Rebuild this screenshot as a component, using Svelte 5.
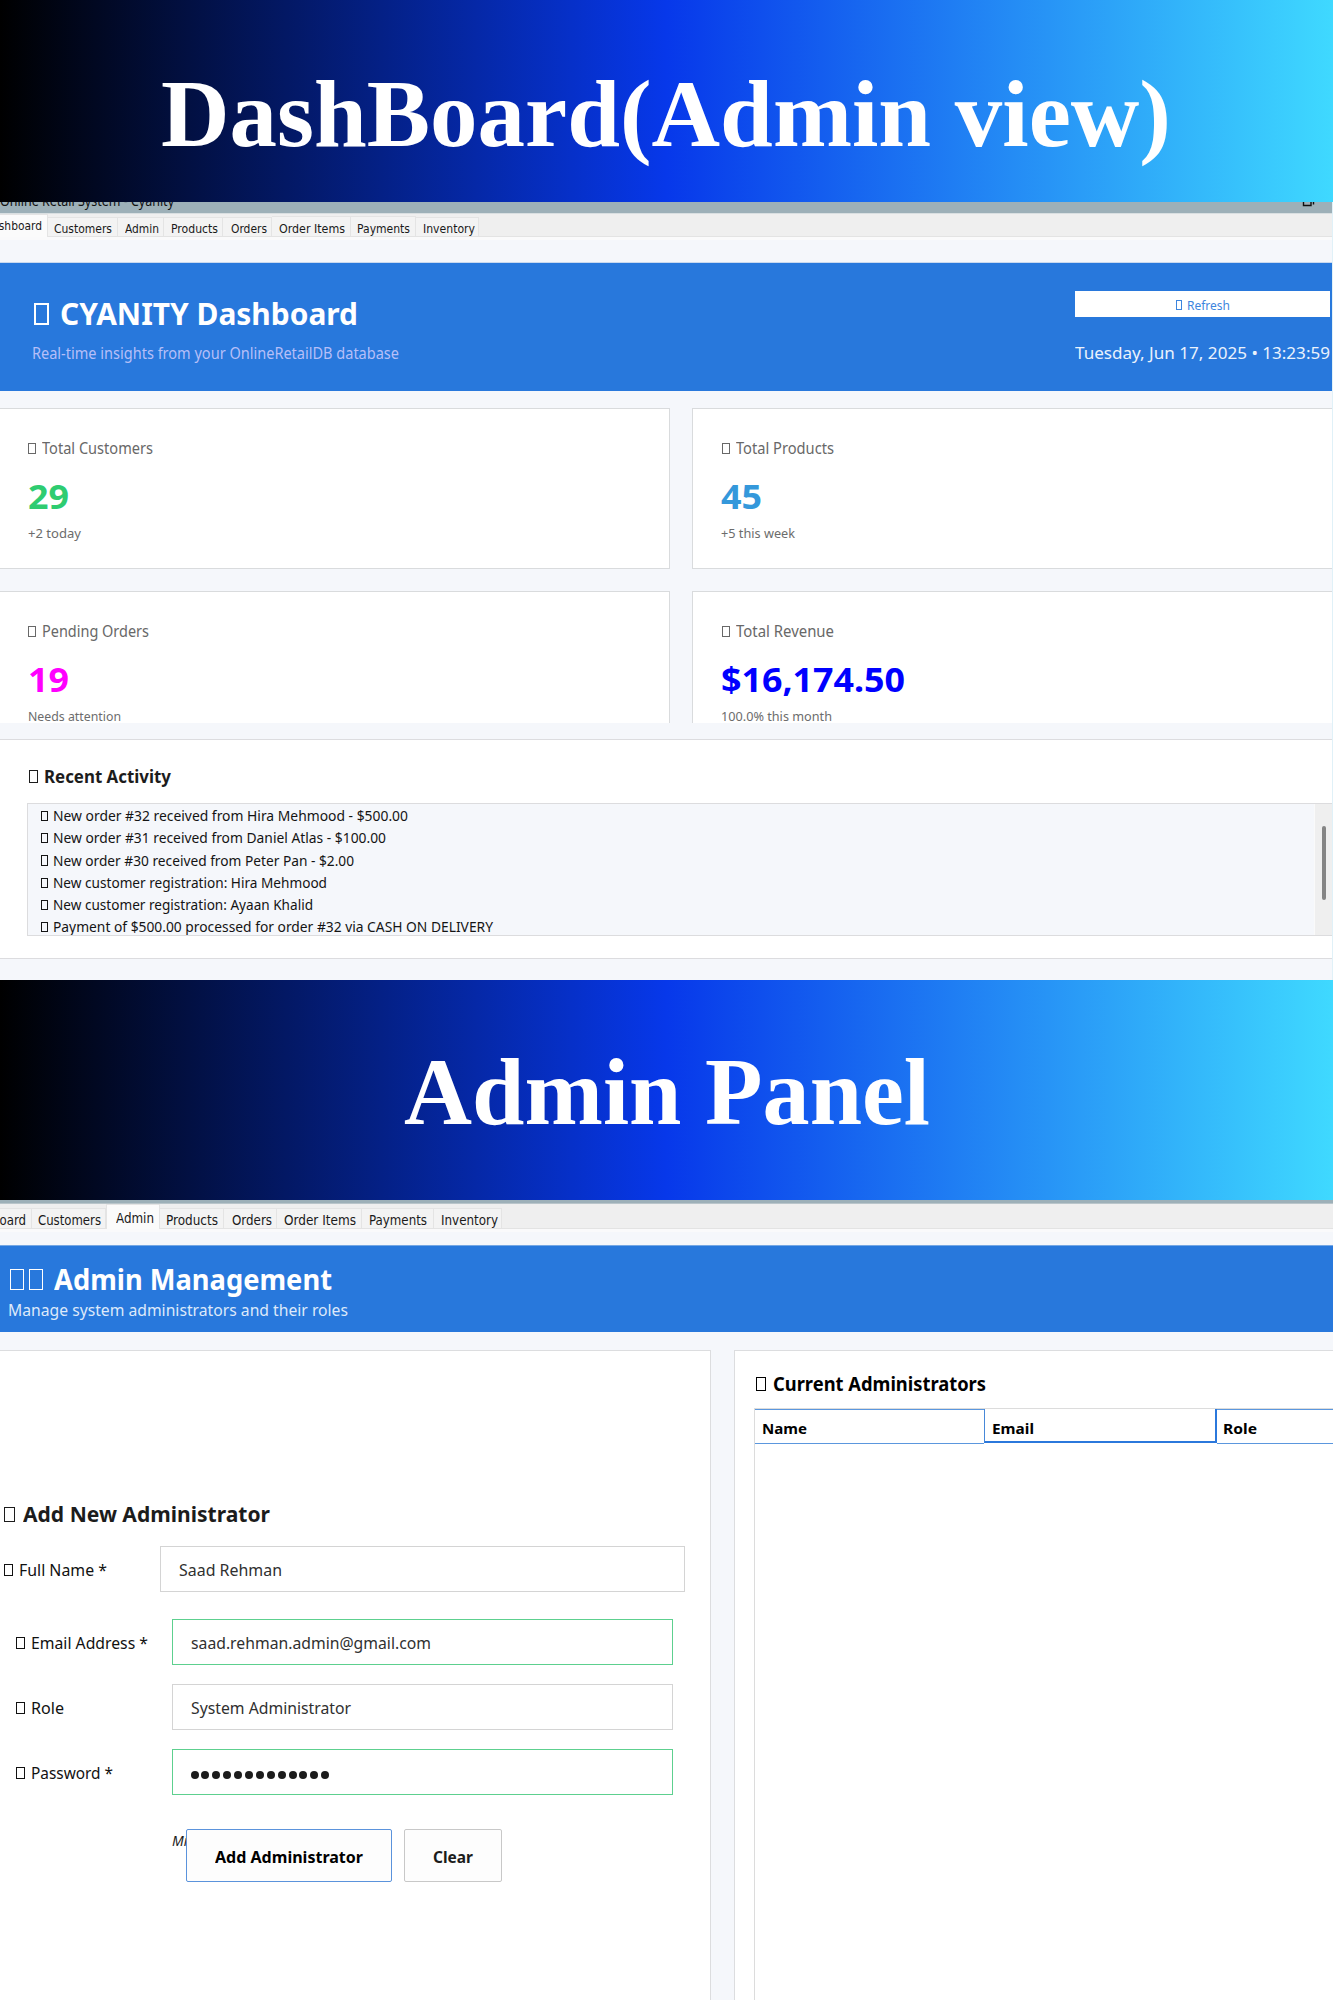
<script>
  // Condenses a run of text so that it spans exactly `width` pixels.
  function fit(node, width) {
    const natural = node.getBoundingClientRect().width;
    node.style.transform = `scaleX(${width / natural})`;
    node.style.marginRight = `${width - natural}px`;
  }

  const dashboardTabs = [
    { label: 'Dashboard', width: 48, pad: 0, text: 58, active: true },
    { label: 'Customers', width: 70, pad: 6, text: 58 },
    { label: 'Admin', width: 46, pad: 7, text: 34 },
    { label: 'Products', width: 59, pad: 7, text: 47 },
    { label: 'Orders', width: 49, pad: 8, text: 36 },
    { label: 'Order Items', width: 79, pad: 7, text: 66, raised: true },
    { label: 'Payments', width: 65, pad: 6, text: 53, raised: true },
    { label: 'Inventory', width: 63, pad: 7, text: 52 }
  ];

  const adminTabs = [
    { label: 'Dashboard', width: 32, pad: 0, text: 64 },
    { label: 'Customers', width: 74, pad: 6, text: 63 },
    { label: 'Admin', width: 54, pad: 9, text: 38, active: true },
    { label: 'Products', width: 64, pad: 6, text: 52 },
    { label: 'Orders', width: 53, pad: 8, text: 40 },
    { label: 'Order Items', width: 85, pad: 7, text: 72, raised: true },
    { label: 'Payments', width: 72, pad: 7, text: 58, raised: true },
    { label: 'Inventory', width: 68, pad: 7, text: 57 }
  ];

  const stats = [
    { title: 'Total Customers', tw: 111, value: '29', vw: 41, tone: 'green', note: '+2 today', nw: 53 },
    { title: 'Total Products', tw: 98, value: '45', vw: 41, tone: 'sky', note: '+5 this week', nw: 74 },
    { title: 'Pending Orders', tw: 107, value: '19', vw: 41, tone: 'pink', note: 'Needs attention', nw: 93 },
    { title: 'Total Revenue', tw: 98, value: '$16,174.50', vw: 184, tone: 'blue', note: '100.0% this month', nw: 111 }
  ];

  const activity = [
    ['New order #32 received from Hira Mehmood - $500.00', 355],
    ['New order #31 received from Daniel Atlas - $100.00', 333],
    ['New order #30 received from Peter Pan - $2.00', 301],
    ['New customer registration: Hira Mehmood', 274],
    ['New customer registration: Ayaan Khalid', 260],
    ['Payment of $500.00 processed for order #32 via CASH ON DELIVERY', 440]
  ];

  const fields = [
    { label: 'Full Name *', lw: 88, value: 'Saad Rehman', vw: 103, wide: true },
    { label: 'Email Address *', lw: 117, value: 'saad.rehman.admin@gmail.com', vw: 240, valid: true },
    { label: 'Role', lw: 33, value: 'System Administrator', vw: 160 },
    { label: 'Password *', lw: 82, dots: 13, valid: true }
  ];
</script>

{#snippet line(text, width)}
  <span class="fit" use:fit={width}>{text}</span>
{/snippet}

{#snippet tabBar(tabs, size)}
  <nav class="tabs {size}">
    {#each tabs as tab}
      <div
        class="tab"
        class:active={tab.active}
        class:raised={tab.raised}
        class:cut={tab.pad === 0}
        style:width="{tab.width}px"
        style:padding-left="{tab.pad}px"
      >
        {@render line(tab.label, tab.text)}
      </div>
    {/each}
  </nav>
{/snippet}

<main>
  <h1 class="banner first">{@render line('DashBoard(Admin view)', 1010)}</h1>

  <section class="window dashboard">
    <div class="titlebar">
      <span class="caption">{@render line('Online Retail System - Cyanity', 174)}</span>
      <svg class="restore" width="14" height="12" viewBox="0 0 14 12">
        <path d="M1.5 0V10.5H9V0M11.5 7V9.5" fill="none" stroke="#111" stroke-width="1.4" />
      </svg>
    </div>
    {@render tabBar(dashboardTabs, 'small')}
    <div class="pane-gap"></div>

    <header class="hero">
      <div>
        <h2><i class="box"></i>{@render line('CYANITY Dashboard', 298)}</h2>
        <p class="sub">{@render line('Real-time insights from your OnlineRetailDB database', 367)}</p>
      </div>
      <div class="hero-side">
        <button class="refresh"><i class="box"></i>{@render line('Refresh', 43)}</button>
        <p class="date">{@render line('Tuesday, Jun 17, 2025 • 13:23:59', 255)}</p>
      </div>
    </header>

    <div class="stats">
      {#each stats as s}
        <article class="stat">
          <h3><i class="box"></i>{@render line(s.title, s.tw)}</h3>
          <p class="value {s.tone}">{@render line(s.value, s.vw)}</p>
          <p class="note">{@render line(s.note, s.nw)}</p>
        </article>
      {/each}
    </div>

    <section class="activity">
      <h3><i class="box"></i>{@render line('Recent Activity', 127)}</h3>
      <div class="list">
        <ul>
          {#each activity as [text, width]}
            <li><i class="box"></i>{@render line(text, width)}</li>
          {/each}
        </ul>
        <div class="scrollbar"><div class="thumb"></div></div>
      </div>
    </section>
  </section>

  <h1 class="banner second">{@render line('Admin Panel', 526)}</h1>

  <section class="window admin">
    <div class="titlebar slim"></div>
    {@render tabBar(adminTabs, 'large')}
    <div class="pane-gap short"></div>

    <header class="hero compact">
      <h2><i class="box"></i><i class="box tight"></i>{@render line('Admin Management', 278)}</h2>
      <p class="sub">{@render line('Manage system administrators and their roles', 340)}</p>
    </header>

    <div class="columns">
      <form class="card add">
        <h3><i class="box"></i>{@render line('Add New Administrator', 247)}</h3>
        {#each fields as f}
          <div class="field" class:wide={f.wide}>
            <div class="label"><i class="box"></i>{@render line(f.label, f.lw)}</div>
            <div class="input" class:valid={f.valid}>
              {#if f.dots}
                <div class="dots">
                  {#each Array(f.dots) as _}<b></b>{/each}
                </div>
              {:else}
                {@render line(f.value, f.vw)}
              {/if}
            </div>
          </div>
        {/each}
        <div class="actions">
          <div class="hint">Min</div>
          <button type="button" class="btn primary">{@render line('Add Administrator', 148)}</button>
          <button type="button" class="btn">{@render line('Clear', 40)}</button>
        </div>
      </form>

      <section class="card current">
        <h3><i class="box"></i>{@render line('Current Administrators', 213)}</h3>
        <div class="table">
          <div class="thead">
            <div class="th">{@render line('Name', 45)}</div>
            <div class="th focus">{@render line('Email', 42)}</div>
            <div class="th">{@render line('Role', 34)}</div>
          </div>
        </div>
      </section>
    </div>
  </section>
</main>

<style>
  :global(body) { margin: 0; background: #f5f7fb; }
  * { box-sizing: border-box; }
  main {
    width: 1333px;
    height: 2000px;
    overflow: hidden;
    font-family: "Noto Sans", "Open Sans", sans-serif;
    color: #1c1c1c;
    background: #f5f7fb;
  }
  h1, h2, h3, p, ul { margin: 0; padding: 0; }
  h2, h3 { display: flex; align-items: baseline; }
  .fit { display: inline-block; white-space: nowrap; transform-origin: 0 50%; }
  .box {
    display: inline-block;
    flex: none;
    width: .5em;
    height: .73em;
    margin: 0 .38em 0 .06em;
    border: max(1.2px, .07em) solid currentColor;
  }

  .banner {
    color: #fff;
    font: bold 95px/176px "Liberation Serif", serif;
    text-align: center;
    background: linear-gradient(90deg, #000 0%, #0738ea 50%, #3fd9ff 100%);
  }
  .first { height: 202px; padding: 26px 2px 0 0; }
  .second { height: 220px; padding-top: 24px; }

  .dashboard { height: 778px; border-right: 1px solid #e0f1f8; }
  .titlebar {
    display: flex;
    justify-content: space-between;
    height: 12px;
    overflow: hidden;
    background: #9db0b8;
    border-bottom: 1px solid #d9dfe1;
  }
  .caption { margin-top: -13px; font-size: 14.8px; line-height: 22px; color: #111; }
  .restore { margin: -7px 16px 0 0; flex: none; }
  .slim { height: 4px; border-bottom-color: #b9c5ca; }

  .tabs {
    display: flex;
    align-items: flex-end;
    font-family: "DejaVu Sans Condensed", "DejaVu Sans", sans-serif;
    font-stretch: condensed;
    color: #1a1a1a;
    background: #efefef;
    border-bottom: 1px solid #e3e3e3;
  }
  .small { height: 23px; font-size: 12.8px; }
  .large { height: 25px; font-size: 13.6px; }
  .tab {
    flex: none;
    height: 19px;
    line-height: 21px;
    background: #f3f3f3;
    border: solid #e4e4e4;
    border-width: 1px 1px 0 0;
  }
  .large .tab { height: 20px; line-height: 23px; }
  .small .raised { height: 20px; line-height: 23px; }
  .cut { display: flex; justify-content: flex-end; padding-right: 5px; overflow: hidden; }
  .small .active { height: 23px; line-height: 22px; margin-bottom: -1px; background: #fbfbfb; }
  .large .active { height: 25px; line-height: 26px; margin-bottom: -1px; background: #fbfbfb; border-left-width: 1px; }
  .pane-gap { height: 26px; border-top: 3px solid #fafafb; border-bottom: 1px solid #c9d9ef; }
  .short { height: 17px; border-bottom-color: #74a7e4; }

  .hero {
    display: flex;
    justify-content: space-between;
    height: 128px;
    padding: 31px 2px 0 32px;
    color: #fff;
    background: #2878dc;
  }
  .hero h2 { font-size: 30px; line-height: 40px; }
  .hero .sub { margin-top: 7px; font-size: 15.6px; line-height: 24px; color: #b6bff8; }
  .hero-side { width: 255px; margin-top: -3px; }
  .refresh {
    display: flex;
    align-items: baseline;
    justify-content: center;
    width: 255px;
    height: 26px;
    padding: 0;
    border: 0;
    background: #fff;
    color: #3d85de;
    font: 13.2px/28px "Noto Sans", sans-serif;
  }
  .date { margin-top: 24px; font-size: 17px; line-height: 24px; color: #eaf2fc; }
  .hero.compact { display: block; height: 86px; padding: 14px 0 0 8px; }
  .compact h2 { font-size: 28.5px; line-height: 38px; }
  .compact h2 .box { margin-right: .12em; }
  .compact h2 .tight { margin-right: .38em; }
  .compact .sub { margin-top: 0; font-size: 16.8px; color: #dde9fa; }

  .stats {
    display: grid;
    grid-template-columns: 670px 1fr;
    grid-template-rows: 161px 161px;
    gap: 22px;
    height: 332px;
    padding-top: 17px;
    overflow: hidden;
  }
  .stat { padding: 27px 0 0 27.5px; background: #fff; border: solid #d9dbdd; border-width: 1px 1px 1px 0; }
  .stat:nth-child(even) { margin-left: -.5px; padding-left: 28.5px; border-width: 1px 0 1px 1px; }
  .stat h3 { font-size: 15.7px; font-weight: 400; line-height: 24px; color: #686868; }
  .value { margin-top: 16px; font-size: 34px; font-weight: 700; line-height: 40px; }
  .note { margin-top: 7px; font-size: 13.4px; line-height: 20px; color: #6c6c6c; }
  .green { color: #2ecc71; }
  .sky { color: #3498db; }
  .pink { color: #f0f; }
  .blue { color: #00f; }

  .activity {
    height: 220px;
    margin-top: 16px;
    padding: 25px 0 0 27px;
    background: #fff;
    border: solid #dcdcdf;
    border-width: 1px 0;
  }
  .activity h3 { padding-left: 1px; font-size: 17.2px; line-height: 24px; }
  .list {
    display: flex;
    justify-content: space-between;
    height: 133px;
    margin-top: 14px;
    overflow: hidden;
    background: #f5f7fb;
    border: solid #dcdcde;
    border-width: 1px 0 1px 1px;
  }
  ul { list-style: none; padding: 1.4px 0 0 12.5px; }
  li { display: flex; align-items: baseline; height: 22.07px; font-size: 13.8px; line-height: 22px; color: #141414; }
  .scrollbar { width: 18px; padding: 22px 0 0 7px; background: #efefef; border-left: 1px solid #fafafa; }
  .thumb { width: 4px; height: 74px; border-radius: 2px; background: #858585; }

  .columns { display: flex; gap: 23px; height: 668px; padding-top: 18px; }
  .card { background: #fff; border: 1px solid #dcdddf; border-bottom: 0; }
  .add { width: 711px; padding-top: 148px; border-left: 0; }
  .add h3 { margin-bottom: 17px; padding-left: 3px; font-size: 21px; line-height: 30px; }
  .field { display: flex; height: 46px; margin-bottom: 19px; padding-left: 15px; font-size: 17px; line-height: 46px; }
  .wide { margin-bottom: 27px; padding-left: 3px; }
  .label { display: flex; align-items: baseline; width: 157px; padding-top: 1px; color: #111; }
  .input { width: 501px; padding-left: 17.5px; color: #303030; background: #fff; border: 1px solid #d4d4d4; }
  .wide .input { width: 525px; }
  .valid { border-color: #5dd08f; }
  .dots { display: flex; align-items: center; gap: 2.9px; height: 50px; }
  .dots b { width: 8px; height: 8px; border-radius: 50%; background: #1c1c1c; }
  .actions { display: flex; margin-top: 34px; padding-left: 172px; }
  .hint { width: 14px; overflow: hidden; font-size: 14px; font-style: italic; line-height: 24px; white-space: nowrap; }
  .btn {
    width: 98px;
    height: 53px;
    padding: 0;
    font: bold 16.5px/54px "Noto Sans", sans-serif;
    color: #1c1c1c;
    background: #fdfdfd;
    border: 1.5px solid #c8c8c8;
    border-radius: 2px;
  }
  .primary { width: 206px; margin-right: 12px; color: #000; border-color: #5b93dc; }

  .current { flex: 1; padding: 21px 0 0 19px; border-right: 0; }
  .current h3 { padding-left: 1px; font-size: 18.8px; line-height: 24px; color: #000; }
  .table { height: 600px; margin-top: 12px; border: solid #dcdcdc; border-width: 1px 0 0 1px; }
  .thead { display: grid; grid-template-columns: 229px 233px 1fr; height: 35px; }
  .th {
    height: 35px;
    padding-left: 7px;
    font-size: 14.2px;
    font-weight: 700;
    line-height: 37px;
    color: #000;
    border: solid #5b97de;
    border-width: 1px 0;
  }
  .th.focus { height: 34px; padding-left: 7px; line-height: 39px; border: solid #2b78dc; border-width: 0 2px 2px 1px; border-left-color: #4888d8; }
  .focus + .th { padding-left: 6px; }
</style>
